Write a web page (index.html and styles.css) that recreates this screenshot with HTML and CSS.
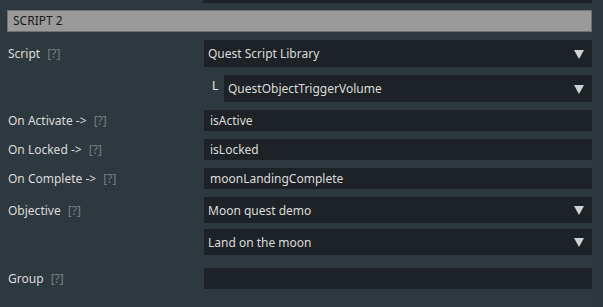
FILE: index.html
```html
<!DOCTYPE html>
<html lang="en">

<head>
    <meta charset="UTF-8">
    <title>Script 2</title>
    <link rel="stylesheet" href="styles.css">
</head>

<body>
    <div class="panel">
        <div class="prev-field"></div>
        <div class="section">SCRIPT 2</div>

        <div class="row drop-row">
            <div class="label">Script <span class="help">[?]</span></div>
            <div class="field select">Quest Script Library<i class="arrow"></i></div>
        </div>
        <div class="row drop-row">
            <div class="label"></div>
            <div class="sub">
                <span class="ell">L</span>
                <div class="field select">QuestObjectTriggerVolume<i class="arrow"></i></div>
            </div>
        </div>
        <div class="row">
            <div class="label">On Activate -&gt; <span class="help">[?]</span></div>
            <div class="field">isActive</div>
        </div>
        <div class="row">
            <div class="label">On Locked -&gt; <span class="help">[?]</span></div>
            <div class="field">isLocked</div>
        </div>
        <div class="row">
            <div class="label">On Complete -&gt; <span class="help">[?]</span></div>
            <div class="field">moonLandingComplete</div>
        </div>
        <div class="row obj-row">
            <div class="label">Objective <span class="help">[?]</span></div>
            <div class="field select">Moon quest demo<i class="arrow"></i></div>
        </div>
        <div class="row obj-row tight">
            <div class="label"></div>
            <div class="field select">Land on the moon<i class="arrow"></i></div>
        </div>
        <div class="row group-row">
            <div class="label">Group <span class="help">[?]</span></div>
            <div class="field"></div>
        </div>
    </div>
</body>

</html>
```

FILE: styles.css
```css
html,
body {
    margin: 0;
    padding: 0;
}

body {
    background-color: #2c363d;
    font-family: "Noto Sans", "DejaVu Sans", sans-serif;
    font-size: 12px;
    color: #dcdcdc;
    height: 307px;
    overflow: hidden;
}

.panel {
    width: 585px;
    padding-left: 7px;
    background-color: #2e383f;
    height: 307px;
}

.prev-field {
    margin-left: 196px;
    height: 3px;
    background-color: #1d2226;
}

.section {
    margin-top: 7px;
    height: 20px;
    line-height: 20px;
    background-color: #9a9a9a;
    border: 1px solid #6d7275;
    color: #1a1a1a;
    padding-left: 5px;
}

.row {
    display: flex;
    margin-top: 8px;
    height: 21px;
}

.drop-row {
    height: 27px;
}

.obj-row {
    height: 26px;
}

.tight {
    margin-top: 6px;
}

.group-row {
    margin-top: 13px;
}

.label {
    width: 196px;
    flex-shrink: 0;
    padding-left: 1px;
    display: flex;
    align-items: center;
    white-space: pre;
}

.help {
    color: #7b7f82;
    margin-left: 4px;
}

.field {
    flex: 1;
    background-color: #1d2226;
    display: flex;
    align-items: center;
    padding-left: 6px;
    position: relative;
}

.field.select {
    padding-left: 4px;
}

.sub {
    flex: 1;
    display: flex;
}

.ell {
    width: 20px;
    padding-left: 8px;
    box-sizing: border-box;
    padding-top: 2px;
    color: #e8e8e8;
}

.select .arrow {
    position: absolute;
    right: 8px;
    top: 50%;
    margin-top: -4px;
    width: 0;
    height: 0;
    border-left: 5px solid transparent;
    border-right: 5px solid transparent;
    border-top: 9px solid #cfd2d4;
}
```
